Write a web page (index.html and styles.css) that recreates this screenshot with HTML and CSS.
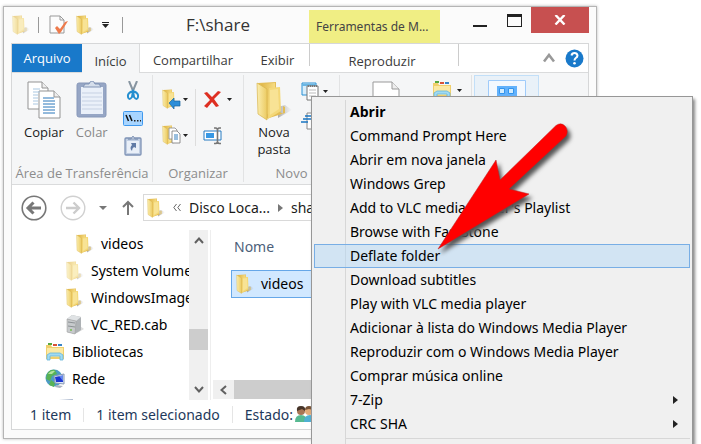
FILE: index.html
```html
<!DOCTYPE html>
<html lang="pt-BR">
<head>
<meta charset="utf-8">
<title>F:\share</title>
<link rel="stylesheet" href="styles.css">
</head>
<body>
<svg class="defs" aria-hidden="true">
  <defs>
    <linearGradient id="gold" x1="0" x2="1"><stop offset="0" stop-color="#fbeeb0"/><stop offset="1" stop-color="#eccb62"/></linearGradient>
    <linearGradient id="golddark" x1="0" x2="1"><stop offset="0" stop-color="#e0b748"/><stop offset="1" stop-color="#f6dc84"/></linearGradient>
    <linearGradient id="shade" x1="0" x2="1"><stop offset="0" stop-color="#8a8a8a" stop-opacity=".7"/><stop offset="1" stop-color="#aaa" stop-opacity="0"/></linearGradient>
    <symbol id="folder" viewBox="0 0 36 40">
      <path d="M22 37 36 29 29 24 22 26z" fill="url(#shade)"/>
      <path d="M2 2 20 1 20 7 24 8 24 31 27 33 27 25 29 26 29 32 10 38z" fill="#e3bd55"/>
      <path d="M5 3 19 2 19 29 10 34z" fill="url(#golddark)"/>
      <path d="M13 7 24 6 25 30 12 38z" fill="#f4d878"/>
      <path d="M1 2 11 8 11 39 2 33z" fill="url(#gold)" stroke="#d9b44e" stroke-width=".7"/>
      <path d="M14 9 22 8 23 28 14 34z" fill="#f9e69c" opacity=".8"/>
    </symbol>
    <symbol id="library" viewBox="0 0 20 18">
      <path d="M1 2h5l1 2h12v12H1z" fill="#f0cf6c"/><path d="M2 5h16v9H2z" fill="#fbe9a5"/>
      <path d="M3 0h4v2H3z" fill="#56a840"/><path d="M8 1h4v2H8z" fill="#d85237"/><path d="M13 1h4v2h-4z" fill="#3984c6"/>
      <path d="M2 17v-5l3-2h10l3 2v5h-3v-4H5v4z" fill="#9fdaf3" stroke="#67b5d8" stroke-width=".8"/>
    </symbol>
    <symbol id="caret" viewBox="0 0 5 3"><path d="M0 0h5L2.500 3z" fill="currentColor"/></symbol>
    <symbol id="network" viewBox="0 0 20 20">
      <circle cx="9" cy="9" r="8.500" fill="#4b9bc4"/><path d="M2 5Q5 0 10 1L12 5 7 7 5 12 1 10zM6 11l4 3-1 4-5-2z" fill="#58b255"/><path d="M3 5q3-4 7-3l-3 3z" fill="#b4e2a0"/>
      <path d="M9 7 19 5 19 15 10 14z" fill="#dce7f7" stroke="#8898b3"/><path d="M10 8 18 6.500V13l-7 0z" fill="#1d36d2"/><path d="M14 7 18 6.500V12z" fill="#6386ef"/><path d="M11 16 18 17 15 19 10 18z" fill="#aab2bf"/>
    </symbol>
  </defs>
</svg>

<main class="window">
  <header class="titlebar">
    <div class="quick">
      <svg class="ico faded" viewBox="0 0 36 40"><use href="#folder"/></svg>
      <span class="bar"></span>
      <svg class="ico-props" viewBox="0 0 19 20"><path d="M1 1H11L15 5V18H1z" fill="#fcfcfc" stroke="#999"/><path d="M11 1V5H15" fill="none" stroke="#999"/><path d="M6 13l2-2 3 3 5-7 3-1-7 11-2 2z" fill="#ee7a4b"/></svg>
      <svg class="ico" viewBox="0 0 36 40"><use href="#folder"/></svg>
      <svg class="ico-more" viewBox="0 0 8 6"><path d="M0 0h7v1H0zM0 2h7L3.500 6z" fill="#222"/></svg>
      <span class="bar"></span>
    </div>
    <h1>F:\share</h1>
    <span class="context-tab">Ferramentas de M...</span>
    <div class="controls">
      <button aria-label="Minimizar"><svg width="14" height="13"><path d="M0 11h14v2H0z" fill="#222"/></svg></button>
      <button aria-label="Maximizar"><svg width="15" height="13"><path d="M0 0h15v13H0zM1 3v9h13V3z" fill="#222" fill-rule="evenodd"/></svg></button>
      <button class="close" aria-label="Fechar"><svg width="12" height="10" viewBox="0 0 12 10"><path d="M1.500 0 10.500 9.500M10.500 0 1.500 9.500" stroke="#fff" stroke-width="2.400"/></svg></button>
    </div>
  </header>

  <section class="frame">
    <nav class="tabs">
      <button class="file">Arquivo</button>
      <button class="active">Início</button>
      <button class="share">Compartilhar</button>
      <button class="view">Exibir</button>
      <button class="play">Reproduzir</button>
      <span class="tab-tools">
        <button aria-label="Minimizar faixa"><svg width="12" height="10" viewBox="0 0 12 10"><path d="M1 8.500 6 2 11 8.500" fill="none" stroke="#999" stroke-width="2.600"/></svg></button>
        <button aria-label="Ajuda"><svg width="19" height="19" viewBox="0 0 19 19"><circle cx="9.500" cy="9.500" r="9" fill="#1979ca"/><path d="M6.500 6.500Q7 4 9.500 4T12.500 6.500Q12.500 8 10.800 9 9.500 10 9.500 11.500" fill="none" stroke="#fff" stroke-width="2"/><circle cx="9.500" cy="14.300" r="1.300" fill="#fff"/></svg></button>
      </span>
    </nav>

    <div class="ribbon">
      <section class="group clipboard">
        <div class="tools">
          <button class="big"><svg width="34" height="38" viewBox="0 0 34 38"><g fill="#fff" stroke="#939393"><path d="M1 1H15L21 7V28H1z"/><path d="M15 1V7H21" fill="#eee"/><path d="M12 10H27L33 16V37H12z"/><path d="M27 10V16H33" fill="#eee"/></g><path d="M6 8h7M6 11h7M6 14h5M6 17h5M6 20h5M6 23h5" stroke="#a9c7e1"/><path d="M16 17h11M16 20h12M16 23h12M16 26h12M16 29h12M16 32h12" stroke="#2977ba"/></svg>Copiar</button>
          <button class="big" disabled><svg width="32" height="38" viewBox="0 0 32 38"><rect x="1" y="2" width="29" height="34" rx="2" fill="#96a6c5" stroke="#8798b9"/><path d="M5 6H27V33H5z" fill="#eaf0f9"/><path d="M6 12h20M6 16h20M6 20h20M6 24h20M6 28h20" stroke="#c6d1e3"/><path d="M9 3h4q1-3 3-3t3 3h4l2 3H7z" fill="#d5deeb" stroke="#8194b5"/></svg>Colar</button>
          <div class="stack">
            <button aria-label="Recortar"><svg width="20" height="20" viewBox="0 0 20 20"><path d="M6 0 11 12M14 0 9 12" stroke="#8795a1" stroke-width="2"/><path d="M10 10Q4 12 5 16T9 16ZM10 10Q16 12 15 16T11 16Z" fill="none" stroke="#258fd0" stroke-width="2"/></svg></button>
            <button aria-label="Copiar caminho"><svg width="20" height="15" viewBox="0 0 20 15"><rect x=".5" y=".5" width="19" height="14" rx="1" fill="#a8d5ff" stroke="#3f98ee"/><path d="M3 4l2.500 6M6.500 4 9 10" stroke="#111" stroke-width="1.500"/><path d="M11 9h1.500v1.500H11zM14 9h1.500v1.500H14zM17 9h1v1.500h-1z" fill="#222"/></svg></button>
            <button aria-label="Colar atalho" disabled><svg width="18" height="20" viewBox="0 0 18 20"><rect x="1" y="2" width="16" height="17" rx="1" fill="#c1cee2" stroke="#7e93b6" stroke-width="1.300"/><path d="M3 5H15V17H3z" fill="#e9eff8"/><path d="M4 3h3l2-3 2 3h3z" fill="#d6dfec" stroke="#8295b5"/><path d="M7 7h5v5l-2-1q-2 1-2 4-3-3 0-6z" fill="#617ba6"/></svg></button>
          </div>
        </div>
        <h2>Área de Transferência</h2>
      </section>
      <section class="group organize">
        <div class="tools">
          <div class="stack two">
            <button aria-label="Mover para"><svg width="19" height="21" viewBox="0 0 19 21"><use href="#folder" width="18" height="20"/><path d="M7 14 12 9V12H18V17H12V20z" fill="#2c8ed9" stroke="#17659f" stroke-width=".7"/></svg><svg class="caret"><use href="#caret"/></svg></button>
            <button aria-label="Copiar para"><svg width="19" height="21" viewBox="0 0 19 21"><use href="#folder" width="18" height="20"/><path d="M7 3h6l2 2v9H7z" fill="#fff" stroke="#888" stroke-width=".8"/><path d="M10 6h5l3 3v9h-8z" fill="#fff" stroke="#777" stroke-width=".8"/><path d="M12 10h4M12 12h4M12 14h4" stroke="#347fbd"/></svg><svg class="caret"><use href="#caret"/></svg></button>
          </div>
          <div class="stack two lined">
            <button aria-label="Excluir"><svg width="19" height="18" viewBox="0 0 19 18"><path d="M1 2 4 1 9 6 15 0 18 1 11 8 16 15 13 16 9 11 4 17 1 15 7 9z" fill="#de2f22"/></svg><svg class="caret"><use href="#caret"/></svg></button>
            <button aria-label="Renomear"><svg width="19" height="18" viewBox="0 0 19 18"><path d="M1 4h17v9H1z" fill="#fff" stroke="#267bc1"/><path d="M3 6h8v5H3z" fill="#3898e4"/><path d="M11 1h2l1.500 1L16 1h2M14.500 2v13M11 16.500h2l1.500-1 1.500 1h2" stroke="#777" stroke-width="1.600" fill="none"/></svg></button>
          </div>
        </div>
        <h2>Organizar</h2>
      </section>
      <section class="group new">
        <div class="tools">
          <button class="big"><svg width="36" height="40" viewBox="0 0 36 40"><use href="#folder"/></svg>Nova<br>pasta</button>
          <div class="stack two">
            <button aria-label="Novo item"><svg width="20" height="20" viewBox="0 0 20 20"><path d="M1 1H15V13H1z" fill="#d9eefb" stroke="#2890d4"/><path d="M1 3h14" stroke="#69b6e4" stroke-width="2"/><path d="M6 4H17V18H6z" fill="#fff" stroke="#777"/><path d="M7 4h10" stroke="#777" stroke-width="2" stroke-dasharray="1 1"/><path d="M8 8h7M8 11h7M8 14h7" stroke="#bbb"/></svg><svg class="caret"><use href="#caret"/></svg></button>
            <button aria-label="Fácil acesso"><svg width="20" height="20" viewBox="0 0 20 20"><path d="M6 2h12v16H6z" fill="#fff" stroke="#888"/><path d="M4 5h9M2 8h8M0 11h7" stroke="#1976c2" stroke-width="1.500"/></svg></button>
          </div>
        </div>
        <h2>Novo</h2>
      </section>
      <section class="group open">
        <div class="tools">
          <svg width="28" height="36" viewBox="0 0 28 36"><path d="M1 1H20L27 8V35H1z" fill="#fff" stroke="#999"/><path d="M20 1V8H27" fill="#eee" stroke="#999"/></svg>
          <button aria-label="Abrir biblioteca"><svg width="20" height="18"><use href="#library"/></svg><svg class="caret"><use href="#caret"/></svg></button>
        </div>
      </section>
      <section class="group select">
        <button class="chosen" aria-label="Selecionar"><svg width="38" height="36" viewBox="0 0 38 36"><path d="M.5 .5h37v35H.5z" fill="#f3f8fe" stroke="#9fcbfa"/><path d="M9 6h20v20H9z" fill="#62b1fb"/><path d="M11.500 8.500h5v5h-5zM20.500 8.500h5v5h-5z" fill="#d2ecff" stroke="#3295ee"/></svg></button>
      </section>
    </div>

    <div class="address">
      <button aria-label="Voltar" class="round"><svg width="26" height="26" viewBox="0 0 26 26"><circle cx="13" cy="13" r="11.800" fill="#fff" stroke="#777" stroke-width="1.600"/><path d="M20 13H8M12.500 7.500 7 13l5.500 5.500" fill="none" stroke="#777" stroke-width="3"/></svg></button>
      <button aria-label="Avançar" class="round"><svg width="26" height="26" viewBox="0 0 26 26"><circle cx="13" cy="13" r="11.800" fill="#fff" stroke="#d0d0d0" stroke-width="1.400"/><path d="M6 13H18M13.500 7.500 19 13l-5.500 5.500" fill="none" stroke="#ccc" stroke-width="2.400"/></svg></button>
      <button aria-label="Locais recentes"><svg width="8" height="4" viewBox="0 0 8 4"><path d="M0 0h8L4 4z" fill="#777"/></svg></button>
      <button aria-label="Acima" class="up"><svg width="12" height="15" viewBox="0 0 12 15"><path d="M6 15V2M1 7 6 2l5 5" fill="none" stroke="#777" stroke-width="2"/></svg></button>
      <div class="path">
        <svg class="ico" viewBox="0 0 36 40"><use href="#folder"/></svg>
        <svg width="8" height="7" viewBox="0 0 8 7"><path d="M3.500 0 .8 3.500l2.700 3.500M7.500 0 4.800 3.500 7.500 7" fill="none" stroke="#666"/></svg>
        <span>Disco Loca...</span>
        <svg width="5" height="8" viewBox="0 0 5 8"><path d="M0 0 5 4 0 8z" fill="#777"/></svg>
        <span>share</span>
      </div>
    </div>

    <div class="body">
      <ul class="tree">
        <li class="deep"><svg class="ico" viewBox="0 0 36 40"><use href="#folder"/></svg>videos</li>
        <li class="mid"><svg class="ico faded" viewBox="0 0 36 40"><use href="#folder"/></svg>System Volume</li>
        <li class="mid"><svg class="ico" viewBox="0 0 36 40"><use href="#folder"/></svg>WindowsImage</li>
        <li class="mid"><svg class="ico" viewBox="0 0 18 20"><path d="M11 18 18 14 14 11z" fill="#ddd"/><path d="M1 4 6 0 15 2V15L9 19 1 17z" fill="#aeb2b5"/><path d="M1 4 6 0 15 2 10 6z" fill="#e0e3e5"/><path d="M1 4 10 6 9 19 1 17z" fill="#c7cacc" stroke="#999" stroke-width=".5"/><path d="M2 7l7 1M2 11l7 1" stroke="#8d9295"/><circle cx="5" cy="15" r="1" fill="#76bd50"/></svg>VC_RED.cab</li>
        <li class="top"><svg class="wide" viewBox="0 0 20 18"><use href="#library"/></svg>Bibliotecas</li>
        <li class="top"><svg class="wide" viewBox="0 0 20 20"><use href="#network"/></svg>Rede</li>
        <li class="host"><svg class="wide" viewBox="0 0 20 20"><path d="M4 5 17 4 19 15 7 14z" fill="#1d36d2" stroke="#a7b5cc" stroke-width="2"/></svg>GOTO</li>
      </ul>
      <div class="vscroll">
        <svg viewBox="0 0 10 7"><path d="M1 6 5 1.500 9 6" /></svg>
        <i></i>
        <svg viewBox="0 0 10 7"><path d="M1 1 5 5.500 9 1" /></svg>
      </div>
      <div class="files">
        <div class="column">Nome</div>
        <div class="file-row"><svg class="ico" viewBox="0 0 36 40"><use href="#folder"/></svg>videos</div>
        <div class="hscroll"><svg viewBox="0 0 7 10"><path d="M6 1 1.500 5 6 9" /></svg><i></i></div>
      </div>
    </div>

    <footer class="status">
      <span>1 item</span>
      <span>1 item selecionado</span>
      <span class="state">Estado:<svg width="22" height="17" viewBox="0 0 22 17"><circle cx="6" cy="5" r="4" fill="#a87655"/><path d="M2 5Q1 0 6 0t4 5L7 3z" fill="#463429"/><path d="M0 16Q0 9 6 9t6 7z" fill="#57b991"/><circle cx="14" cy="5" r="4" fill="#e2aa78"/><path d="M10 4q0-4 4-4t4 4l-4-1z" fill="#785337"/><path d="M9 16q0-7 6-7t6 7z" fill="#50b0d3"/></svg></span>
    </footer>
  </section>
</main>

<div class="overlay">
  <div class="menu" role="menu">
    <button role="menuitem" class="default">Abrir</button>
    <button role="menuitem">Command Prompt Here</button>
    <button role="menuitem">Abrir em nova janela</button>
    <button role="menuitem">Windows Grep</button>
    <button role="menuitem">Add to VLC media player's Playlist</button>
    <button role="menuitem">Browse with FastStone</button>
    <button role="menuitem" class="hot">Deflate folder</button>
    <button role="menuitem">Download subtitles</button>
    <button role="menuitem">Play with VLC media player</button>
    <button role="menuitem">Adicionar à lista do Windows Media Player</button>
    <button role="menuitem">Reproduzir com o Windows Media Player</button>
    <button role="menuitem">Comprar música online</button>
    <button role="menuitem">7-Zip<svg width="5" height="8" viewBox="0 0 5 8"><path d="M0 0 5 4 0 8z" fill="#222"/></svg></button>
    <button role="menuitem">CRC SHA<svg width="5" height="8" viewBox="0 0 5 8"><path d="M0 0 5 4 0 8z" fill="#222"/></svg></button>
    <hr>
  </div>
  <svg class="pointer" width="140" height="136" viewBox="0 0 140 136"><path d="M2 130 60 41 64 61 120 6.500Q125 3 129 7T130 17L73 70 93 75z" fill="#f00" stroke="#b22" stroke-width=".5"/></svg>
</div>
</body>
</html>
```
FILE: styles.css
```css
* { box-sizing: border-box; }
html, body { height: 100%; }
body {
  position: relative;
  display: flex;
  margin: 0;
  padding: 6px 104px 5px 3px;
  overflow: hidden;
  background: #fff;
  color: #1a1a1a;
  font: 14px/20px "Noto Sans", "Open Sans", sans-serif;
}
button { display: flex; align-items: center; margin: 0; padding: 0; border: 0; background: none; color: inherit; font: inherit; }
h1, h2, ul { margin: 0; padding: 0; font-weight: normal; list-style: none; }
svg { flex: none; }
.defs { position: absolute; width: 0; height: 0; }
.ico { width: 18px; height: 20px; }
.wide { width: 20px; height: 20px; }
.faded { opacity: .6; }
.caret { width: 5px; height: 3px; color: #222; }

.window {
  flex: 1;
  min-width: 0;
  display: flex;
  flex-direction: column;
  padding: 0 7px 8px 7px;
  border: 1px solid #b5b5b5;
  background: #fbfbfb;
  box-shadow: 0 0 3px #bbb;
}
.titlebar { display: flex; align-items: stretch; height: 36px; }
.quick { display: flex; align-items: center; width: 175px; gap: 8px; padding-left: 1px; }
.quick .bar { width: 1px; height: 16px; background: #999; }
.ico-props { width: 19px; height: 20px; margin-left: 2px; }
.ico-more { width: 8px; height: 6px; margin-right: 4px; }
h1 { width: 123px; color: #333; font-family: "Open Sans", sans-serif; font-size: 17px; line-height: 36px; }
.context-tab { width: 131px; margin-top: 3px; padding-left: 7px; background: #f0ee84; color: #444; font-size: 12px; line-height: 33px; white-space: nowrap; }
.controls { display: flex; align-items: flex-start; margin-left: auto; }
.controls button { width: 34px; height: 26px; justify-content: center; }
.controls .close { width: 58px; background: #c75050; }

.frame { flex: 1; min-height: 0; display: flex; flex-direction: column; border: 1px solid #d6d7d8; background: #fff; }
.tabs { display: flex; height: 29px; border-bottom: 1px solid #dadbdc; color: #3b3b3b; font-family: "Open Sans", sans-serif; font-size: 13px; }
.tabs > button { justify-content: center; padding-top: 4px; }
.tabs .file { width: 70px; padding-top: 0; background: #1979ca; color: #fff; }
.tabs .active { width: 58px; height: 29px; border-right: 1px solid #dadbdc; background: #f5f6f7; }
.tabs .share { width: 106px; }
.tabs .view { width: 63px; }
.tabs .play { width: 150px; height: 22px; padding: 11px 4px 0 0; border: solid #ccc; border-width: 0 1px; }
.tab-tools { display: flex; align-items: center; gap: 10px; margin-left: auto; padding-right: 4px; }

.ribbon { display: flex; height: 112px; border-bottom: 1px solid #dadbdc; background: #f5f6f7; font-family: "Open Sans", sans-serif; font-size: 13px; line-height: 17px; }
.group { display: flex; flex-direction: column; margin: 2px 0; border-right: 1px solid #e2e3e4; }
.group h2 { margin-top: auto; color: #8c8c8c; font-size: 13px; line-height: 17px; text-align: center; white-space: nowrap; }
.tools { display: flex; padding-top: 6px; }
.big { flex-direction: column; gap: 5px; }
.big:disabled { color: #888; }
.clipboard { width: 141px; }
.clipboard .tools { gap: 12px; padding-left: 12px; }
.clipboard .stack { margin-left: 3px; }
.stack { display: flex; flex-direction: column; align-items: center; gap: 10px; }
.stack.two { align-items: flex-start; gap: 15px; padding-top: 8px; }
.stack.two button { gap: 2px; height: 21px; }
.organize { width: 91px; }
.organize .tools { gap: 7px; padding-left: 9px; }
.organize .lined { height: 57px; margin-top: 8px; padding: 0 0 0 7px; border-left: 1px solid #ddd; }
.organize .lined button { gap: 5px; }
.new { width: 96px; }
.new .tools { gap: 9px; padding-left: 12px; }
.new .big { gap: 3px; }
.new .stack { gap: 8px; padding-top: 0; }
.new .stack button { gap: 2px; }
.open { width: 132px; }
.open .tools { gap: 32px; padding-left: 32px; align-items: flex-start; }
.open button { gap: 5px; }
.select { flex: 1; padding-left: 2px; border: 0; }
.chosen { width: 65px; height: 70px; justify-content: center; align-items: flex-start; padding-top: 4px; border: 1px solid #c2dff8; background: #e9f1f8; }

.address { display: flex; align-items: center; height: 45px; padding-left: 9px; }
.address button { margin-right: 13px; }
.address .up { margin: 0 9px 0 2px; }
.path { flex: 1; min-width: 0; display: flex; align-items: center; gap: 8px; height: 27px; padding-left: 3px; border: 1px solid #d9d9d9; white-space: nowrap; }

.body { flex: 1; min-height: 0; display: flex; overflow: hidden; }
.tree { width: 177px; overflow: hidden; white-space: nowrap; color: #000; }
.tree li { display: flex; align-items: center; gap: 7px; height: 27px; }
.deep { padding-left: 64px; }
.mid { padding-left: 54px; }
.top { padding-left: 33px; }
.host { padding-left: 43px; }
.vscroll { display: flex; flex-direction: column; align-items: center; justify-content: space-between; width: 19px; padding: 7px 0; background: #f0f0f0; }
.vscroll svg { width: 10px; height: 7px; }
.vscroll i { width: 19px; height: 21px; margin-top: 49px; background: #cdcdcd; }
.vscroll path, .hscroll path { fill: none; stroke: #606060; stroke-width: 2; }
.files { flex: 1; display: flex; flex-direction: column; margin-left: 2px; border-left: 1px solid #eee; }
.column { padding: 7px 0 0 23px; color: #4c607a; }
.file-row { display: flex; align-items: center; gap: 7px; height: 28px; margin: 13px 0 0 20px; padding-left: 4px; border: 1px solid #66a7e8; background: #d1e8ff; color: #000; }
.hscroll { display: flex; align-items: center; height: 19px; margin: auto 0 1px 2px; background: #f0f0f0; }
.hscroll svg { width: 7px; height: 10px; margin: 0 7px; }
.hscroll i { flex: 1; height: 19px; background: #cdcdcd; }
.status { display: flex; align-items: center; height: 29px; padding-left: 18px; color: #1e395b; white-space: nowrap; }
.status span { padding-right: 12px; }
.status span + span { padding-left: 12px; border-left: 1px solid #e5e5e5; line-height: 14px; }
.state { display: flex; align-items: center; gap: 2px; }

.overlay { position: absolute; inset: 0; overflow: hidden; pointer-events: none; }
.menu {
  position: absolute;
  top: 96px;
  left: 311px;
  right: 8px;
  padding: 3px 2px;
  border: 1px solid #979797;
  background: linear-gradient(#d7d7d7, #d7d7d7) 33px 3px / 1px 100% no-repeat #f0f0f0;
  box-shadow: 2px 3px 3px #888;
  color: #000;
  pointer-events: auto;
}
.menu button { width: 100%; height: 24px; padding: 0 11px 0 35px; border: 1px solid transparent; justify-content: space-between; white-space: nowrap; }
.menu .default { font-family: "Open Sans", sans-serif; font-weight: bold; }
.menu .hot { border-color: #78aee5; background: rgba(180, 216, 245, .5); }
.menu hr { height: 1px; margin: 2px 0 12px 32px; border: 0; background: #d7d7d7; }
.pointer { position: absolute; top: 119px; left: 436px; filter: drop-shadow(3px 4px 2px #555); }
```
